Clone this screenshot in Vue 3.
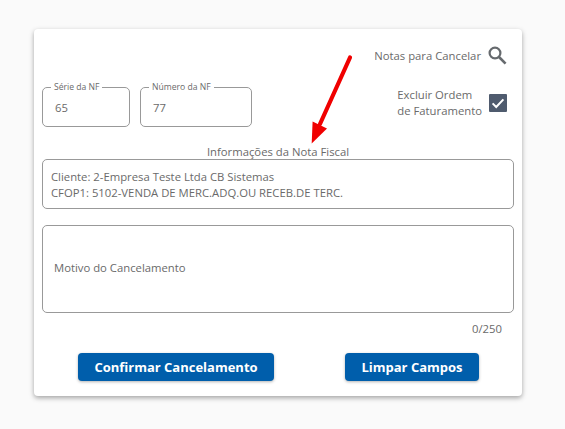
<template>
  <div class="page">
    <section class="card">
      <div class="top-row">
        <span>Notas para Cancelar</span>
        <svg class="search-icon" viewBox="0 0 19 19" width="19" height="19">
          <circle cx="7" cy="7" r="5.4" fill="none" stroke="#666a6e" stroke-width="2.2" />
          <path d="M11 11l6.6 6.6" fill="none" stroke="#666a6e" stroke-width="2.6" />
        </svg>
      </div>

      <div class="fields-row">
        <fieldset v-for="field in fields" :key="field.label" class="field" :style="{ width: field.width + 'px' }">
          <legend>{{ field.label }}</legend>
          <span>{{ field.value }}</span>
        </fieldset>
        <div class="exclude">
          <span>Excluir Ordem<br />de Faturamento</span>
          <span class="checkbox">
            <svg viewBox="0 0 18 18" width="18" height="18">
              <path d="M3.6 9.4l3.6 3.6 7.2-7.6" fill="none" stroke="#fff" stroke-width="2" />
            </svg>
          </span>
        </div>
      </div>

      <div class="info-title">Informações da Nota Fiscal</div>
      <div class="info-box">
        <div>Cliente: 2-Empresa Teste Ltda CB Sistemas</div>
        <div>CFOP1: 5102-VENDA DE MERC.ADQ.OU RECEB.DE TERC.</div>
      </div>

      <div class="reason-box">Motivo do Cancelamento</div>
      <div class="counter">0/250</div>

      <div class="actions">
        <button class="btn btn-confirm">Confirmar Cancelamento</button>
        <button class="btn btn-clear">Limpar Campos</button>
      </div>

      <!-- seta vermelha por cima do conteúdo -->
      <svg class="arrow" width="50" height="92" viewBox="0 0 50 92">
        <path d="M40 3.5 L10 70" stroke="#f00000" stroke-width="4.2" stroke-linecap="round" fill="none" />
        <path d="M1.7 89.5 L2.6 67.5 L17 74.5 Z" fill="#f00000" />
      </svg>
    </section>
  </div>
</template>

<script setup>
const fields = [
  { label: 'Série da NF', value: '65', width: 88 },
  { label: 'Número da NF', value: '77', width: 112 },
]
</script>

<style>
body {
  background: #fafafa;
}
</style>

<style scoped>
.page {
  height: 429px;
  padding: 29px 0 0 34px;
  box-sizing: border-box;
  font-family: 'Open Sans', 'Noto Sans', sans-serif;
  color: #6a6a6a;
  font-size: 11.3px;
}

.card {
  position: relative;
  width: 488px;
  height: 367px;
  box-sizing: border-box;
  padding: 14px 8px 0;
  background: #fff;
  border-radius: 4px;
  box-shadow: 0 2px 5px rgba(0, 0, 0, 0.35);
}

.top-row {
  display: flex;
  justify-content: flex-end;
  align-items: center;
  gap: 7px;
  height: 24px;
  padding-right: 7px;
}

.search-icon {
  display: block;
}

.fields-row {
  display: flex;
  align-items: flex-start;
  gap: 10px;
  margin-top: 14px;
  height: 46px;
}

.field {
  height: 46px;
  margin: 0;
  padding: 0 0 0 12px;
  box-sizing: border-box;
  border: 1px solid #999;
  border-radius: 5px;
  line-height: 30px;
  min-width: 0;
}

.field legend {
  padding: 0 3px;
  margin-left: -4px;
  font-size: 8.6px;
  line-height: 12px;
}

.exclude {
  display: flex;
  align-items: center;
  gap: 7px;
  margin-left: auto;
  margin-top: 6px;
  padding-right: 7px;
  line-height: 16px;
}

.checkbox {
  display: block;
  width: 18px;
  height: 18px;
  background: #4f5b6e;
  border-radius: 1px;
}

.checkbox svg {
  display: block;
}

.info-title {
  margin-top: 17px;
  text-align: center;
  line-height: 15px;
}

.info-box {
  height: 50px;
  padding: 9px 8px 0;
  box-sizing: border-box;
  border: 1px solid #999;
  border-radius: 5px;
  line-height: 15.5px;
}

.reason-box {
  height: 88px;
  margin-top: 16px;
  padding: 34px 11px 0;
  box-sizing: border-box;
  border: 1px solid #999;
  border-radius: 5px;
  line-height: 16px;
}

.counter {
  margin-top: 8px;
  padding-right: 12px;
  text-align: right;
  line-height: 16px;
}

.actions {
  display: flex;
  margin-top: 16px;
  padding-left: 36px;
  gap: 71px;
}

.btn {
  height: 28px;
  border: none;
  border-radius: 4px;
  background: #005eab;
  color: #fff;
  font-family: 'Open Sans', 'Noto Sans', sans-serif;
  font-size: 13px;
  font-weight: 700;
  box-shadow: 0 1px 3px rgba(0, 0, 0, 0.3);
  padding: 0;
}

.btn-confirm {
  width: 196px;
}

.btn-clear {
  width: 134px;
}

.arrow {
  position: absolute;
  left: 276px;
  top: 25px;
}
</style>
